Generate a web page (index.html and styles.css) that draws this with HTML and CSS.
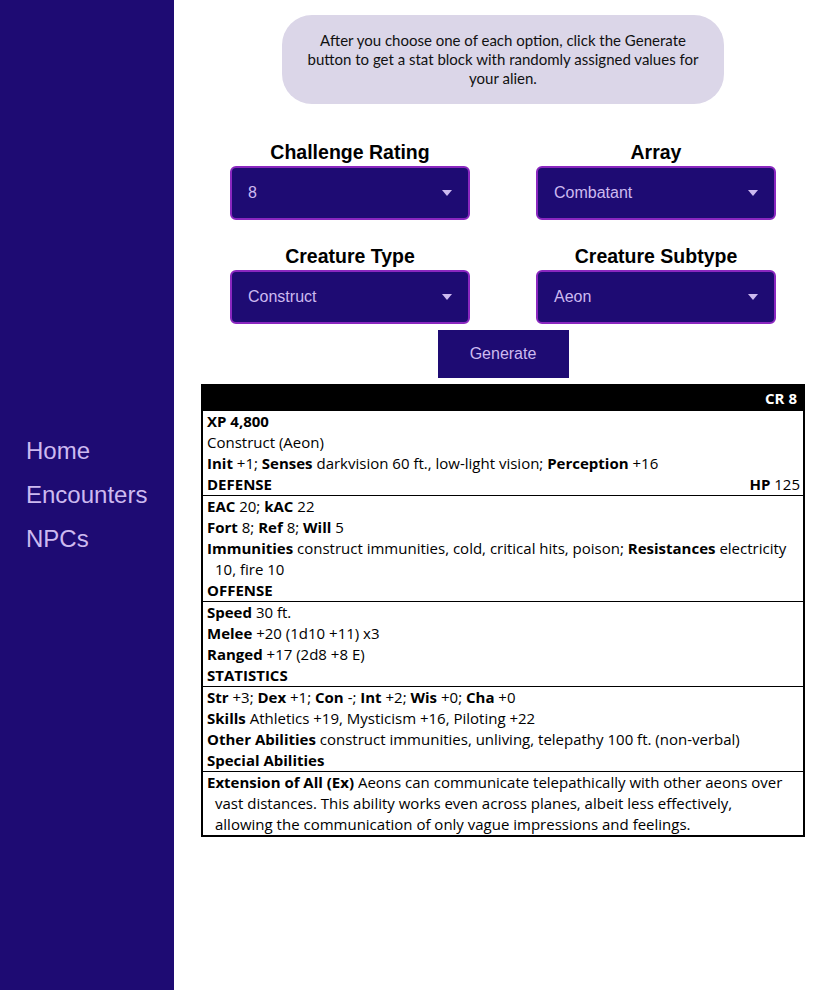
FILE: index.html
```html
<!DOCTYPE html>
<html lang="en">
<head>
<meta charset="utf-8">
<title>Alien Generator</title>
<link rel="stylesheet" href="styles.css">
</head>
<body>
<div class="layout">
  <nav class="sidebar">
    <a class="nav-link" href="#">Home</a>
    <a class="nav-link" href="#">Encounters</a>
    <a class="nav-link" href="#">NPCs</a>
  </nav>
  <main class="main">
    <p class="intro">After you choose one of each option, click the Generate button to get a stat block with randomly assigned values for your alien.</p>
    <div class="options">
      <div class="field">
        <label class="field-label">Challenge Rating</label>
        <div class="select"><span class="select-value">8</span><svg class="arrow" width="10" height="6" viewBox="0 0 10 6"><path d="M0 0H10L5 6Z"/></svg></div>
      </div>
      <div class="field">
        <label class="field-label">Array</label>
        <div class="select"><span class="select-value">Combatant</span><svg class="arrow" width="10" height="6" viewBox="0 0 10 6"><path d="M0 0H10L5 6Z"/></svg></div>
      </div>
      <div class="field">
        <label class="field-label">Creature Type</label>
        <div class="select"><span class="select-value">Construct</span><svg class="arrow" width="10" height="6" viewBox="0 0 10 6"><path d="M0 0H10L5 6Z"/></svg></div>
      </div>
      <div class="field">
        <label class="field-label">Creature Subtype</label>
        <div class="select"><span class="select-value">Aeon</span><svg class="arrow" width="10" height="6" viewBox="0 0 10 6"><path d="M0 0H10L5 6Z"/></svg></div>
      </div>
    </div>
    <button class="generate">Generate</button>
    <div class="statblock">
      <div class="sb-header">CR 8</div>
      <div class="sb-section">
        <div class="sb-line"><b>XP 4,800</b></div>
        <div class="sb-line">Construct (Aeon)</div>
        <div class="sb-line"><b>Init</b> +1; <b>Senses</b> darkvision 60 ft., low-light vision; <b>Perception</b> +16</div>
        <div class="sb-heading"><b>DEFENSE</b><span><b>HP</b> 125</span></div>
      </div>
      <div class="sb-section">
        <div class="sb-line"><b>EAC</b> 20; <b>kAC</b> 22</div>
        <div class="sb-line"><b>Fort</b> 8; <b>Ref</b> 8; <b>Will</b> 5</div>
        <div class="sb-line"><b>Immunities</b> construct immunities, cold, critical hits, poison; <b>Resistances</b> electricity 10, fire 10</div>
        <div class="sb-heading"><b>OFFENSE</b></div>
      </div>
      <div class="sb-section">
        <div class="sb-line"><b>Speed</b> 30 ft.</div>
        <div class="sb-line"><b>Melee</b> +20 (1d10 +11) x3</div>
        <div class="sb-line"><b>Ranged</b> +17 (2d8 +8 E)</div>
        <div class="sb-heading"><b>STATISTICS</b></div>
      </div>
      <div class="sb-section">
        <div class="sb-line"><b>Str</b> +3; <b>Dex</b> +1; <b>Con</b> -; <b>Int</b> +2; <b>Wis</b> +0; <b>Cha</b> +0</div>
        <div class="sb-line"><b>Skills</b> Athletics +19, Mysticism +16, Piloting +22</div>
        <div class="sb-line"><b>Other Abilities</b> construct immunities, unliving, telepathy 100 ft. (non-verbal)</div>
        <div class="sb-heading"><b>Special Abilities</b></div>
      </div>
      <div class="sb-section">
        <div class="sb-line"><b>Extension of All (Ex)</b> Aeons can communicate telepathically with other aeons over vast distances. This ability works even across planes, albeit less effectively, allowing the communication of only vague impressions and feelings.</div>
      </div>
    </div>
  </main>
</div>
</body>
</html>
```
FILE: styles.css
```css
* { box-sizing: border-box; }
html, body { margin: 0; padding: 0; background: #fff; }
body { font-family: "Liberation Sans", Arial, sans-serif; }

.layout {
  display: flex;
  min-height: 990px;
}

.sidebar {
  width: 174px;
  flex: none;
  background: #1e0b73;
  display: flex;
  flex-direction: column;
  justify-content: center;
  gap: 16px;
  padding-left: 26px;
}
.nav-link {
  color: #cdbaf0;
  text-decoration: none;
  font-size: 24px;
  line-height: 28px;
}

.main {
  flex: 1;
  display: flex;
  flex-direction: column;
  align-items: center;
  padding: 15px 0 0 3px;
}

.intro {
  width: 442px;
  margin: 0;
  background: #dbd6e8;
  border-radius: 30px;
  padding: 16px 20px;
  text-align: center;
  font-family: "Lato", "Open Sans", sans-serif;
  font-size: 15px;
  line-height: 19px;
  color: #111;
}

.options {
  margin-top: 36px;
  display: grid;
  grid-template-columns: 240px 240px;
  column-gap: 66px;
  row-gap: 24px;
}
.field {
  display: flex;
  flex-direction: column;
  align-items: center;
  gap: 2px;
}
.field-label {
  font-size: 19.5px;
  line-height: 24px;
  font-weight: bold;
  color: #000;
}
.select {
  width: 240px;
  height: 54px;
  background: #1e0b73;
  border: 2px solid #8a27bf;
  border-radius: 6px;
  display: flex;
  align-items: center;
  justify-content: space-between;
  padding: 0 16px 0 16px;
  color: #cdbaf0;
  font-size: 16px;
}
.arrow { fill: #cdbaf0; }

.generate {
  margin-top: 6px;
  width: 131px;
  height: 48px;
  border: none;
  background: #1e0b73;
  color: #cdbaf0;
  font-family: "Liberation Sans", Arial, sans-serif;
  font-size: 16px;
  padding: 0;
}

.statblock {
  margin-top: 6px;
  width: 604px;
  border: 2px solid #000;
  font-family: "Open Sans", sans-serif;
  font-size: 15px;
  line-height: 21px;
  color: #000;
}
.sb-header {
  background: #000;
  color: #fff;
  font-weight: bold;
  text-align: right;
  height: 25px;
  line-height: 25px;
  padding-right: 6px;
}
.sb-section {
  padding: 0 3px 0 4px;
  border-top: 1px solid #000;
}
.sb-header + .sb-section { border-top: none; }
.sb-line {
  padding-left: 8px;
  padding-right: 10px;
  text-indent: -8px;
}
.sb-heading {
  display: flex;
  justify-content: space-between;
}
b { font-weight: bold; }
```
